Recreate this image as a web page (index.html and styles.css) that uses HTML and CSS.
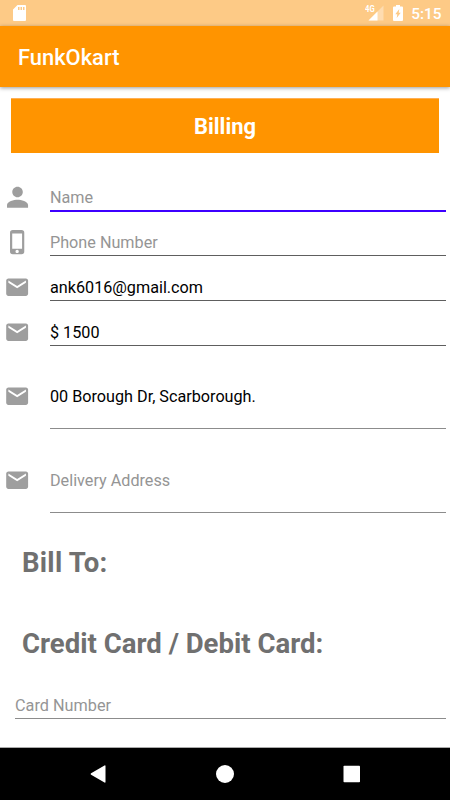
FILE: index.html
```html
<!DOCTYPE html>
<html lang="en">
<head>
<meta charset="utf-8">
<title>FunkOkart</title>
<link rel="stylesheet" href="styles.css">
</head>
<body>
<svg class="defs" aria-hidden="true">
  <symbol id="mail" viewBox="0 0 24 24"><path d="M20 4H4c-1.1 0-1.99.9-1.99 2L2 18c0 1.1.9 2 2 2h16c1.1 0 2-.9 2-2V6c0-1.100-.9-2-2-2zm0 4l-8 5-8-5V6l8 5 8-5v2z"/></symbol>
</svg>
<div class="screen">
  <div class="status">
    <svg class="sd" viewBox="0 0 13 16"><path fill-rule="evenodd" d="M4.500 0H12a1 1 0 0 1 1 1v14a1 1 0 0 1-1 1H1a1 1 0 0 1-1-1V4.500zM5 2v3h1.500V2zm2.500 0v3H9V2zM10 2v3h1.500V2z"/></svg>
    <div class="signal">
      <svg viewBox="0 0 16 16"><path class="faint" d="M15.500.5v15H.5z"/><path d="M9.500 6.500v9H.5z"/></svg>
      <span>4G</span>
    </div>
    <svg class="battery" viewBox="0 0 10 16"><path fill-rule="evenodd" d="M3 0h4v1.500h2a1 1 0 0 1 1 1V15a1 1 0 0 1-1 1H1a1 1 0 0 1-1-1V2.500a1 1 0 0 1 1-1h2zM6.300 4L2.300 9.300h2L3.700 13l4-5.200h-2z"/></svg>
    <span class="clock">5:15</span>
  </div>
  <header class="appbar">FunkOkart</header>
  <main class="content">
    <h1 class="banner">Billing</h1>
    <div class="row focused">
      <svg class="icon" viewBox="1.700 2 20 20"><path d="M12 12c2.210 0 4-1.790 4-4s-1.790-4-4-4-4 1.790-4 4 1.790 4 4 4zm0 2c-2.670 0-8 1.340-8 4v2h16v-2c0-2.660-5.330-4-8-4z"/></svg>
      <div class="field hint">Name</div>
    </div>
    <div class="row">
      <svg class="icon" viewBox="-.5 0 24 24"><path d="M15.500 1h-8A2.500 2.500 0 0 0 5 3.500v17A2.500 2.500 0 0 0 7.500 23h8a2.500 2.500 0 0 0 2.500-2.500v-17A2.500 2.500 0 0 0 15.500 1zm-4 21c-.83 0-1.500-.67-1.500-1.500s.67-1.500 1.500-1.500 1.500.67 1.500 1.500-.67 1.500-1.500 1.500zm4.500-4H7V4h9v14z"/></svg>
      <div class="field hint">Phone Number</div>
    </div>
    <div class="row">
      <svg class="icon"><use href="#mail"/></svg>
      <div class="field">ank6016@gmail.com</div>
    </div>
    <div class="row">
      <svg class="icon"><use href="#mail"/></svg>
      <div class="field">$ 1500</div>
    </div>
    <div class="row tall">
      <svg class="icon"><use href="#mail"/></svg>
      <div class="field">00 Borough Dr, Scarborough.</div>
    </div>
    <div class="row tall">
      <svg class="icon"><use href="#mail"/></svg>
      <div class="field hint">Delivery Address</div>
    </div>
    <h2 class="heading bill">Bill To:</h2>
    <h2 class="heading">Credit Card / Debit Card:</h2>
    <div class="card-field hint">Card Number</div>
  </main>
  <nav class="navbar">
    <svg viewBox="0 0 18 18"><path d="M1.100 8.300L14.500.5a.7.7 0 0 1 1 .6v15.800a.7.700 0 0 1-1 .6L1.100 9.700a.8.8 0 0 1 0-1.400z"/></svg>
    <svg viewBox="0 0 18 18"><circle cx="9" cy="9" r="9"/></svg>
    <svg viewBox="0 0 18 18"><rect x=".5" y=".7" width="16.500" height="16.500" rx=".8"/></svg>
  </nav>
</div>
</body>
</html>
```
FILE: styles.css
```css
* { box-sizing: border-box; }
body {
  margin: 0;
  font-family: Roboto, "Liberation Sans", sans-serif;
  background: #fff;
}
.defs { display: none; }
.screen {
  width: 450px;
  height: 800px;
  display: flex;
  flex-direction: column;
  overflow: hidden;
}
.status {
  height: 26px;
  flex: none;
  display: flex;
  background: #fdca86;
  fill: #fff;
  color: #fff;
  padding: 5px 8.500px 0 13px;
}
.sd { width: 13px; height: 16px; }
.signal {
  position: relative;
  width: 16px;
  height: 16px;
  margin-left: auto;
}
.signal svg { display: block; width: 16px; height: 16px; }
.signal .faint { fill-opacity: .35; }
.signal span {
  position: absolute;
  left: -3px;
  top: -1px;
  font-size: 9px;
  line-height: 10px;
  font-weight: 700;
  transform: scaleX(.85);
  transform-origin: left;
}
.battery { width: 10px; height: 16px; margin: 0 8px 0 9px; }
.clock {
  font-size: 15.400px;
  line-height: 18px;
  font-weight: 500;
}
.appbar {
  height: 61px;
  flex: none;
  padding-left: 18px;
  background: #ff9400;
  color: #fff;
  font-size: 21.900px;
  font-weight: 500;
  line-height: 63px;
  box-shadow: 0 1px 4px rgba(0, 0, 0, .4);
}
.content { flex: 1; padding-top: 11px; }
.banner {
  height: 55px;
  margin: 0 11px 27px;
  background: #ff9400;
  border-top: 1px solid #ffaf54;
  color: #fff;
  font-size: 21.900px;
  font-weight: 700;
  line-height: 56px;
  text-align: center;
}
.row {
  height: 45px;
  display: flex;
  padding: 4px 4px 0;
}
.icon {
  width: 26.300px;
  height: 26.300px;
  margin-left: .4px;
  flex: none;
  fill: #9e9e9e;
}
.field {
  flex: 1;
  height: 27px;
  margin-left: 19.300px;
  border-bottom: 1px solid #5e5e5e;
  color: #000;
  font-size: 16.200px;
  line-height: 27px;
}
.focused .field { height: 28px; border-bottom: 2px solid #3d00ff; }
.hint, .field.hint { color: #959595; }
.tall { height: 83.500px; padding-top: 23px; }
.tall .field { height: 46px; border-color: #8c8c8c; }
.heading {
  margin: 0 0 0 22px;
  height: 81px;
  padding-top: 20px;
  color: #707070;
  font-size: 27.550px;
  line-height: 32px;
  font-weight: 700;
}
.bill { letter-spacing: .25px; }
.card-field {
  margin: 3px 4px 0 15px;
  height: 27px;
  border-bottom: 1px solid #8c8c8c;
  font-size: 16.250px;
  line-height: 27px;
}
.navbar {
  height: 53px;
  flex: none;
  display: flex;
  justify-content: center;
  align-items: center;
  gap: 108.500px;
  background: #000;
  border-top: 1px solid #aaa;
  fill: #fff;
}
.navbar svg { width: 18px; height: 18px; }
```
